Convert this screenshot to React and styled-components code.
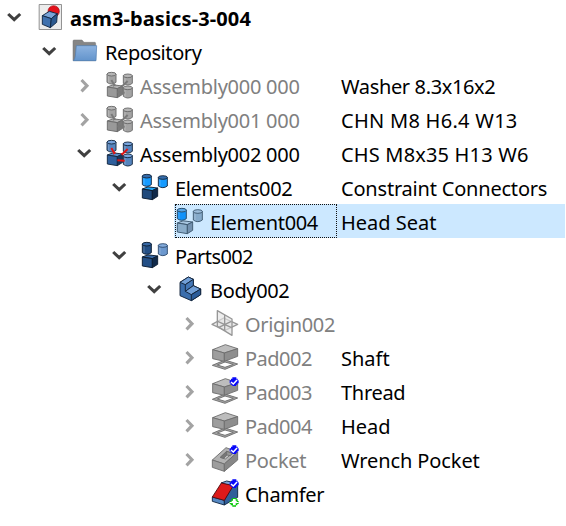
import React from "react";
import styled, { createGlobalStyle } from "styled-components";

const GlobalStyle = createGlobalStyle`
  body { margin: 0; background: #fff; }
`;

const Tree = styled.div`
  width: 566px;
  height: 526px;
  overflow: hidden;
  background: #fff;
  color: #000;
  font: 20px/38px "Noto Sans", "Open Sans", sans-serif;
  white-space: pre;
`;

const Row = styled.div`
  display: flex;
  height: 34px;
  color: ${(p) => (p.$hidden ? "#808080" : "#000")};
`;

const NameColumn = styled.div`
  flex: none;
  display: flex;
  width: 337px;
`;

const Gutter = styled.div`
  flex: none;
  box-sizing: border-box;
  width: ${(p) => p.$depth * 35 + 34}px;
  padding: 10px 14px 0 0;
  display: flex;
  justify-content: flex-end;
`;

const NameCell = styled.div`
  flex: 1;
  padding-left: 1px;
  height: 34px;
  background: ${(p) => (p.$selected ? "#cce8ff" : "transparent")};
`;

const FocusFrame = styled.div`
  display: flex;
  box-sizing: border-box;
  height: 34px;
  border: 1px dotted ${(p) => (p.$selected ? "#111" : "transparent")};
`;

const IconBox = styled.span`
  flex: none;
  width: 34px;
  height: 26px;
  margin-top: 3px;
  svg { display: block; overflow: visible; }
`;

const Label = styled.span`
  letter-spacing: ${(p) => p.$track}px;
  font-weight: ${(p) => (p.$bold ? 700 : 400)};
  margin-top: -1px;
`;

const Description = styled.div`
  flex: none;
  box-sizing: border-box;
  width: 228px;
  height: 34px;
  padding-left: 4px;
  color: #000;
  letter-spacing: ${(p) => p.$track}px;
  background: ${(p) => (p.$selected ? "#cce8ff" : "transparent")};
`;

const Arrow = styled.svg`
  flex: none;
  overflow: visible;
`;

function Chevron({ open }) {
  return (
    <Arrow width="13" height="13" fill="none" strokeWidth="3.1" stroke={open ? "#404040" : "#a3a3a3"}>
      <path d={open ? "M1.200 4 L7.200 9.700 L13.200 4" : "M4.500 2 L10 7.700 L4.500 13.400"} />
    </Arrow>
  );
}

function Svg({ children }) {
  return (
    <svg width="27" height="26" viewBox="0 0 81 78" strokeLinejoin="round" strokeWidth="2.8">
      {children}
    </svg>
  );
}

function Cylinder({ x, y, h = 32, body, top, edge }) {
  return (
    <g transform={`translate(${x} ${y})`} stroke={edge}>
      <path d={`M1 6 V${h - 5} Q14.500 ${h + 5} 28 ${h - 5} V6Z`} fill={body} />
      <path d={`M6 12 V${h - 4}`} stroke="#fff" strokeOpacity=".25" />
      <ellipse cx="14.5" cy="6.5" rx="13.5" ry="5.5" fill={top} />
    </g>
  );
}

function Cube({ x = 3, y = 37, front, top, side, edge }) {
  return (
    <g transform={`translate(${x} ${y})`} stroke={edge}>
      <path d="M1 8 L18 1.500 L47 5 L31 13Z" fill={top} />
      <path d="M1 8 L31 13 V40 L1 35Z" fill={front} />
      <path d="M31 13 L47 5 V30 L31 40Z" fill={side} />
    </g>
  );
}

const STEEL = { body: "#5584bd", top: "#79a4dc", edge: "#14283f" };
const GRAY = { body: "#a3a3a3", top: "#b5b5b5", edge: "#6a6a6a" };

function AssemblyIcon({ gray }) {
  const c = gray ? GRAY : STEEL;
  const link = gray ? "#797979" : "#e01414";
  return (
    <Svg>
      <Cylinder x={2} y={0} h={36} {...c} />
      <Cylinder x={51} y={5} h={34} {...c} />
      <Cube y={37} edge={c.edge} front={gray ? "#999" : "#2f5f9c"} top={gray ? "#b0b0b0" : "#5a8cc8"} side={gray ? "#7b7b7b" : "#17365e"} />
      <Cylinder x={51} y={41} h={37} {...c} />
      <g stroke={link} strokeWidth="6" fill="none">
        <path d="M16 24 L26 41 M65 27 L47 44 M34 61 L56 62" />
      </g>
      <g stroke={link} strokeWidth="3"><path d="M22 43 L29 38 M45 39 L51 46" /></g>
    </Svg>
  );
}

function ElementsIcon() {
  const c = { body: "#169bff", top: "#356cab", edge: "#14283f" };
  return (
    <Svg>
      <Cylinder x={3} y={0} h={37} {...c} />
      <Cylinder x={51} y={4} h={37} {...c} />
      <Cube edge="#0b1c30" front="#204a7c" top="#20a5f5" side="#102a4a" />
    </Svg>
  );
}

function ElementIcon() {
  const c = { body: "#86aaca", top: "#9dbddb", edge: "#3d5870" };
  return (
    <Svg>
      <Cylinder x={3} y={0} h={37} body="#0e91fa" top="#58a5e5" edge="#254865" />
      <Cylinder x={51} y={4} h={37} {...c} />
      <Cube edge={c.edge} front="#8badca" top="#a7c5df" side="#7391af" />
    </Svg>
  );
}

function PartsIcon() {
  return (
    <Svg>
      <Cylinder x={3} y={0} h={37} body="#234f86" top="#3768a5" edge="#0b1c30" />
      <Cylinder x={51} y={4} h={37} body="#6c98ce" top="#83abdc" edge="#2e4b70" />
      <Cube edge="#0b1c30" front="#234f86" top="#3768a5" side="#102a4a" />
    </Svg>
  );
}

function DocumentIcon() {
  return (
    <Svg>
      <rect x="9.5" y="1.5" width="67" height="75" fill="#ececec" stroke="#8b8b8b" />
      <circle cx="53" cy="22" r="17" fill="#e3121b" stroke="#a51018" strokeWidth="2" />
      <g stroke="#102744">
        <path d="M19 35 L40 22 L64 29 L46 44Z" fill="#79a4d8" />
        <path d="M19 35 L46 44 L43 71 L19 61Z" fill="#3e70ae" />
        <path d="M46 44 L64 29 L62 55 L43 71Z" fill="#2b598f" />
      </g>
    </Svg>
  );
}

function FolderIcon() {
  return (
    <Svg>
      <defs>
        <linearGradient id="folder" x2="0" y2="1">
          <stop stopColor="#8db3e0" /><stop offset="1" stopColor="#6394cc" />
        </linearGradient>
      </defs>
      <path d="M6 9 Q6 6 9 6 H33 L39 13 H71 Q74 13 74 17 V68 H6Z" fill="#858585" stroke="#757575" strokeWidth="1.5" />
      <path d="M16 23 H77 L75 68 H7 Q12 64 13 54Z" fill="url(#folder)" stroke="#4f7db4" strokeWidth="2" />
    </Svg>
  );
}

function BodyIcon() {
  return (
    <Svg>
      <g stroke="#12243a">
        <path d="M12 19 L37 3 L52 10 L52 29 L74 39 V56 L46 74 L12 59Z" fill="#3b6eac" />
        <path d="M12 19 L37 3 L52 10 L28 26Z" fill="#719fd7" />
        <path d="M28 26 L52 10 V29 L28 46Z" fill="#4477b6" />
        <path d="M28 46 L52 29 L74 39 L46 56Z" fill="#719fd7" />
        <path d="M46 56 L74 39 V56 L46 74Z" fill="#2b5c9a" />
      </g>
    </Svg>
  );
}

function OriginIcon() {
  return (
    <Svg>
      <g stroke="#979797" strokeWidth="4" fill="#e3e3e3" fillOpacity=".65">
        <path d="M3 43 L38 24 L80 43 L42 61Z" />
        <path d="M19 2 L63 27 V76 L19 49Z" />
        <path d="M41 15 V62 M20 34 L62 53 M22 53 L61 34" fill="none" />
      </g>
    </Svg>
  );
}

function Checked() {
  return (
    <g>
      <path d="M64 -2 H76 V2 H80 V7 H83 V16 H79 V20 H75 V24 H64 V20 H59 V16 H56 V7 H60 V2 H64Z" fill="#0808fa" />
      <path d="M60 12 L67 18 L78 6" stroke="#fff" strokeWidth="4.5" fill="none" strokeLinejoin="miter" />
    </g>
  );
}

function PadIcon({ checked }) {
  return (
    <Svg>
      <g stroke="#6e6e6e">
        <path fillRule="evenodd" d="M4 64 L42 48 L80 60 L42 76Z M19 63 L42 54 L67 61 L42 70Z" fill="#a5a5a5" />
        <path d="M5 17 L43 2 L80 14 L40 27Z" fill="#bdbdbd" />
        <path d="M5 17 L40 27 V52 L5 44Z" fill="#9d9d9d" />
        <path d="M40 27 L80 14 V37 L40 52Z" fill="#8e8e8e" />
      </g>
      {checked && <Checked />}
    </Svg>
  );
}

function PocketIcon() {
  return (
    <Svg>
      <g stroke="#6e6e6e">
        <path d="M4 42 L45 5 L80 18 L40 54Z" fill="#b2b2b2" />
        <path d="M4 42 L40 54 V76 L4 64Z" fill="#9d9d9d" />
        <path d="M40 54 L80 18 V42 L40 76Z" fill="#878787" />
        <path d="M28 34 L47 16 L64 22 L43 39Z" fill="#dcdcdc" />
        <path d="M28 34 L47 16 V29 L38 37Z" fill="#777" />
        <path d="M47 16 L64 22 L58 29 L47 27Z" fill="#999" />
      </g>
      <Checked />
    </Svg>
  );
}

function ChamferIcon() {
  return (
    <Svg>
      <g stroke="#102744">
        <path d="M30 9 L47 3 L80 10 L62 18Z" fill="#7ba4d6" />
        <path d="M4 51 L40 61 V75 L4 64Z" fill="#5689c4" />
        <path d="M40 61 L65 18 L80 10 V52 L40 75Z" fill="#315f9a" />
        <path d="M4 51 L31 9 L67 17 L40 61Z" fill="#dd1a1a" stroke="#520d12" />
      </g>
      <Checked />
      <path d="M64 54 H76 V58 H80 V63 H83 V72 H79 V76 H75 V80 H64 V76 H59 V72 H56 V63 H60 V58 H64Z" fill="#08c808" />
      <path d="M66 57 H74 V62 H77 V70 H74 V76 H66 V70 H62 V62 H66Z M56 66 H62 V69 H56Z M77 66 H83 V69 H77Z" fill="#fff" />
    </Svg>
  );
}

const ITEMS = [
  { depth: 0, open: true, icon: <DocumentIcon />, name: "asm3-basics-3-004", track: 0.12, bold: true },
  { depth: 1, open: true, icon: <FolderIcon />, name: "Repository", track: -0.42 },
  { depth: 2, open: false, hidden: true, icon: <AssemblyIcon gray />, name: "Assembly000 000", track: -0.25, text: "Washer 8.3x16x2", textTrack: -0.36 },
  { depth: 2, open: false, hidden: true, icon: <AssemblyIcon gray />, name: "Assembly001 000", track: -0.25, text: "CHN M8 H6.4 W13", textTrack: 0.28 },
  { depth: 2, open: true, icon: <AssemblyIcon />, name: "Assembly002 000", track: -0.25, text: "CHS M8x35 H13 W6", textTrack: 0.17 },
  { depth: 3, open: true, icon: <ElementsIcon />, name: "Elements002", track: -0.33, text: "Constraint Connectors", textTrack: -0.2 },
  { depth: 4, selected: true, icon: <ElementIcon />, name: "Element004", track: -0.35, text: "Head Seat", textTrack: 0 },
  { depth: 3, open: true, icon: <PartsIcon />, name: "Parts002", track: -0.6 },
  { depth: 4, open: true, icon: <BodyIcon />, name: "Body002", track: -0.36 },
  { depth: 5, open: false, hidden: true, icon: <OriginIcon />, name: "Origin002", track: -0.35 },
  { depth: 5, open: false, hidden: true, icon: <PadIcon />, name: "Pad002", track: -0.5, text: "Shaft" },
  { depth: 5, open: false, hidden: true, icon: <PadIcon checked />, name: "Pad003", track: -0.5, text: "Thread", textTrack: -0.3 },
  { depth: 5, open: false, hidden: true, icon: <PadIcon />, name: "Pad004", track: -0.5, text: "Head" },
  { depth: 5, open: false, hidden: true, icon: <PocketIcon />, name: "Pocket", track: -0.3, text: "Wrench Pocket", textTrack: -0.1 },
  { depth: 5, icon: <ChamferIcon />, name: "Chamfer", track: -0.3 },
];

export default function App() {
  return (
    <Tree>
      <GlobalStyle />
      {ITEMS.map((item) => (
        <Row key={item.name} $hidden={item.hidden}>
          <NameColumn>
            <Gutter $depth={item.depth}>
              {item.open !== undefined && <Chevron open={item.open} />}
            </Gutter>
            <NameCell $selected={item.selected}>
              <FocusFrame $selected={item.selected}>
                <IconBox>{item.icon}</IconBox>
                <Label $track={item.track} $bold={item.bold}>{item.name}</Label>
              </FocusFrame>
            </NameCell>
          </NameColumn>
          <Description $selected={item.selected} $track={item.textTrack || 0}>{item.text}</Description>
        </Row>
      ))}
    </Tree>
  );
}
